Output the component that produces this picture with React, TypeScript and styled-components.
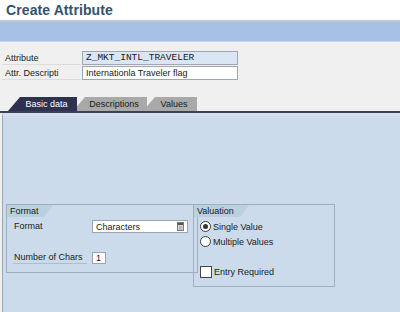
import React from "react";
import styled, { createGlobalStyle } from "styled-components";

const GlobalStyle = createGlobalStyle`
  html, body { margin: 0; padding: 0; }
  body {
    background: #f0f0f0;
    font-family: "Liberation Sans", Arial, sans-serif;
    font-size: 9px;
    color: #1a1a1a;
  }
`;

const Page = styled.div`
  width: 400px;
  height: 312px;
  overflow: hidden;
  display: flex;
  flex-direction: column;
`;

const Header = styled.header`
  height: 20px;
  background: #fff;
  padding-left: 6px;
  display: flex;
  align-items: center;
`;

const Title = styled.h1`
  margin: 0;
  font-size: 14px;
  font-weight: bold;
  color: #34526f;
  letter-spacing: 0.1px;
`;

const AppBar = styled.div`
  height: 19px;
  background: #a6c1e5;
  border-top: 2px solid #c2c8d0;
  border-bottom: 1px solid #c5d3e6;
`;

const Form = styled.div`
  padding: 9px 0 0 2px;
  display: flex;
  flex-direction: column;
  gap: 1px;
`;

const Row = styled.div`
  display: flex;
  align-items: center;
  height: 14px;
`;

const Label = styled.span`
  width: 79px;
  height: 14px;
  line-height: 14px;
  padding-left: 3px;
  border-bottom: 1px solid #dcdcdc;
  box-sizing: border-box;
  margin-right: 1px;
  white-space: nowrap;
  overflow: hidden;
`;

const Field = styled.div<{ $readOnly?: boolean; $mono?: boolean }>`
  width: 156px;
  height: 14px;
  box-sizing: border-box;
  border: 1px solid #9ea6b4;
  background: ${(p) => (p.$readOnly ? "#dbe6f4" : "#ffffff")};
  padding-left: 3px;
  line-height: 12px;
  font-family: ${(p) =>
    p.$mono ? `"Liberation Mono", "DejaVu Sans Mono", monospace` : "inherit"};
  font-size: ${(p) => (p.$mono ? "9.5px" : "9px")};
  white-space: nowrap;
  overflow: hidden;
`;

const TabStrip = styled.div`
  margin-top: 17px;
  padding-left: 8px;
  display: flex;
  height: 14px;
  border-bottom: 2px solid #3a4154;
`;

const Tab = styled.div<{ $active?: boolean; $width: number }>`
  width: ${(p) => p.$width}px;
  margin-left: -4px;
  &:first-child { margin-left: 0; }
  background: ${(p) => (p.$active ? "#2e3250" : "#a9a9a9")};
  color: ${(p) => (p.$active ? "#ffffff" : "#1a1a1a")};
  clip-path: polygon(12px 0, 100% 0, 100% 100%, 0 100%);
  display: flex;
  align-items: center;
  justify-content: center;
  padding-left: 8px;
  box-sizing: border-box;
  font-size: 9px;
  position: relative;
  z-index: ${(p) => (p.$active ? 2 : 1)};
`;

const Panel = styled.div`
  flex: 1;
  margin-left: 2px;
  border-left: 1px solid #9aa8b8;
  border-top: 3px solid #d3e0ee;
  background: #cbdbeb;
  padding: 88px 0 0 3px;
  display: flex;
  align-items: flex-start;
`;

const Group = styled.div<{ $width: number; $height: number; $overlap?: boolean }>`
  width: ${(p) => p.$width}px;
  height: ${(p) => p.$height}px;
  box-sizing: border-box;
  border: 1px solid #9fafbf;
  margin-left: ${(p) => (p.$overlap ? "-5px" : "0")};
  display: flex;
  flex-direction: column;
`;

const GroupTitle = styled.div<{ $width: number }>`
  width: ${(p) => p.$width}px;
  height: 12px;
  line-height: 12px;
  background: #b9d0df;
  padding-left: 3px;
  box-sizing: border-box;
  clip-path: polygon(0 0, 100% 0, calc(100% - 9px) 100%, 0 100%);
  font-size: 9px;
  color: #1a1a1a;
`;

const GroupBody = styled.div`
  display: flex;
  flex-direction: column;
  padding: 2px 0 0 6px;
`;

const FieldRow = styled.div<{ $gap?: number }>`
  display: flex;
  align-items: center;
  height: 13px;
  margin-top: ${(p) => p.$gap ?? 0}px;
`;

const FieldLabel = styled.span<{ $underline?: boolean }>`
  width: 74px;
  padding-left: 1px;
  line-height: 12px;
  border-bottom: 1px solid ${(p) => (p.$underline ? "#aebdcc" : "transparent")};
  box-sizing: border-box;
  margin-right: 5px;
`;

const Select = styled.div`
  width: 96px;
  height: 13px;
  box-sizing: border-box;
  border: 1px solid #9aa4b0;
  background: #fff;
  padding: 0 3px;
  display: flex;
  align-items: center;
  justify-content: space-between;
`;

const SmallInput = styled.div`
  width: 14px;
  height: 12px;
  box-sizing: border-box;
  border: 1px solid #9aa4b0;
  background: #fff;
  padding-left: 3px;
  line-height: 10px;
`;

const OptionBody = styled.div`
  display: flex;
  flex-direction: column;
  padding: 2px 0 0 6px;
`;

const Option = styled.label<{ $gap?: number }>`
  display: flex;
  align-items: center;
  gap: 2px;
  height: 13px;
  margin-top: ${(p) => p.$gap ?? 0}px;
  font-size: 9px;
`;

const Radio = styled.span<{ $checked?: boolean }>`
  width: 9px;
  height: 9px;
  border-radius: 50%;
  border: 1px solid #3b3b3b;
  background: #fff;
  display: flex;
  align-items: center;
  justify-content: center;
  &::after {
    content: "";
    width: 5px;
    height: 5px;
    border-radius: 50%;
    background: ${(p) => (p.$checked ? "#333" : "transparent")};
  }
`;

const Check = styled.span`
  width: 10px;
  height: 10px;
  border: 1px solid #444;
  background: #fff;
`;

function ListIcon() {
  return (
    <svg width="7" height="9" viewBox="0 0 7 9">
      <rect x="0.5" y="0.5" width="6" height="8" fill="#d8d8d8" stroke="#777" />
      <rect x="1" y="1" width="5" height="2" fill="#555" />
      <line x1="2" y1="5" x2="5" y2="5" stroke="#999" />
      <line x1="2" y1="7" x2="5" y2="7" stroke="#999" />
    </svg>
  );
}

export default function App() {
  return (
    <Page>
      <GlobalStyle />
      <Header>
        <Title>Create Attribute</Title>
      </Header>
      <AppBar />
      <Form>
        <Row>
          <Label>Attribute</Label>
          <Field $readOnly $mono>Z_MKT_INTL_TRAVELER</Field>
        </Row>
        <Row>
          <Label>Attr. Descripti</Label>
          <Field>Internationla Traveler flag</Field>
        </Row>
      </Form>
      <TabStrip>
        <Tab $active $width={69}>Basic data</Tab>
        <Tab $width={74}>Descriptions</Tab>
        <Tab $width={54}>Values</Tab>
      </TabStrip>
      <Panel>
        <Group $width={192} $height={69}>
          <GroupTitle $width={46}>Format</GroupTitle>
          <GroupBody>
            <FieldRow $gap={1}>
              <FieldLabel>Format</FieldLabel>
              <Select>
                <span>Characters</span>
                <ListIcon />
              </Select>
            </FieldRow>
            <FieldRow $gap={18}>
              <FieldLabel $underline>Number of Chars</FieldLabel>
              <SmallInput>1</SmallInput>
            </FieldRow>
          </GroupBody>
        </Group>
        <Group $width={142} $height={83} $overlap>
          <GroupTitle $width={55}>Valuation</GroupTitle>
          <OptionBody>
            <Option $gap={1}>
              <Radio $checked />
              Single Value
            </Option>
            <Option $gap={2}>
              <Radio />
              Multiple Values
            </Option>
            <Option $gap={17}>
              <Check />
              Entry Required
            </Option>
          </OptionBody>
        </Group>
      </Panel>
    </Page>
  );
}
